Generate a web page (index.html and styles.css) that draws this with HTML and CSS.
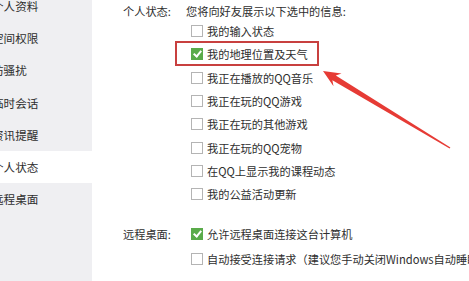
FILE: index.html
```html
<!DOCTYPE html>
<html lang="zh-CN">
<head>
<meta charset="utf-8">
<link rel="stylesheet" href="styles.css">
</head>
<body>
<div class="page">
  <nav class="sidebar">
    <div class="nav-item">个人资料</div>
    <div class="nav-item">空间权限</div>
    <div class="nav-item">防骚扰</div>
    <div class="nav-item">临时会话</div>
    <div class="nav-item">资讯提醒</div>
    <div class="nav-item active">个人状态</div>
    <div class="nav-item">远程桌面</div>
  </nav>
  <main class="main">
    <section class="section status">
      <div class="label">个人状态:</div>
      <div class="content">
        <div class="intro">您将向好友展示以下选中的信息:</div>
        <div class="options">
          <div class="option"><span class="box"></span>我的输入状态</div>
          <div class="option"><span class="box checked"></span>我的地理位置及天气</div>
          <div class="option"><span class="box"></span>我正在播放的QQ音乐</div>
          <div class="option"><span class="box"></span>我正在玩的QQ游戏</div>
          <div class="option"><span class="box"></span>我正在玩的其他游戏</div>
          <div class="option"><span class="box"></span>我正在玩的QQ宠物</div>
          <div class="option"><span class="box"></span>在QQ上显示我的课程动态</div>
          <div class="option"><span class="box"></span>我的公益活动更新</div>
        </div>
      </div>
    </section>
    <section class="section remote">
      <div class="label">远程桌面:</div>
      <div class="content">
        <div class="options">
          <div class="option"><span class="box checked"></span>允许远程桌面连接这台计算机</div>
          <div class="option"><span class="box"></span>自动接受连接请求（建议您手动关闭Windows自动睡眠和</div>
        </div>
      </div>
    </section>
  </main>
  <div class="highlight"></div>
  <svg class="arrow" width="469" height="281" viewBox="0 0 469 281">
    <polygon points="323,71 341.5,73.5 335.8,75.6 450.4,147.6 449.6,148.4 332.4,80.2 333.5,86.2" fill="#e63b35"/>
  </svg>
</div>
</body>
</html>
```
FILE: styles.css
```css
html, body {
  margin: 0;
  padding: 0;
  background: #ffffff;
}
.page {
  position: relative;
  width: 469px;
  height: 281px;
  overflow: hidden;
  display: flex;
  font-family: "Noto Sans CJK SC", "Microsoft YaHei", sans-serif;
  font-size: 11.2px;
  color: #2e2e2e;
}
.sidebar {
  width: 92px;
  flex: none;
  background: #efeff2;
  padding-top: 0;
  margin-top: -10px;
  height: 300px;
}
.nav-item {
  height: 32.2px;
  line-height: 32.2px;
  text-indent: -8px;
  white-space: nowrap;
  font-size: 11.6px;
}
.nav-item.active {
  background: #ffffff;
}
.main {
  flex: 1;
  padding-left: 31px;
  display: flex;
  flex-direction: column;
}
.section {
  display: grid;
  grid-template-columns: 63px 1fr;
}
.label {
  line-height: 22px;
  white-space: nowrap;
}
.intro {
  line-height: 22px;
  white-space: nowrap;
}
.options {
  display: flex;
  flex-direction: column;
  padding-left: 5px;
}
.status .options {
  margin-top: -2.6px;
}
.option {
  height: 23.3px;
  display: flex;
  align-items: center;
  gap: 4px;
  white-space: nowrap;
}
.remote {
  margin-top: 16px;
}
.remote .label {
  line-height: 25px;
}
.remote .option {
  height: 25px;
}
.box {
  width: 10px;
  height: 10px;
  border: 1px solid #b4b4b4;
  background: #fff;
  flex: none;
  position: relative;
}
.box.checked {
  background: #5aab4a;
  border-color: #5aab4a;
}
.box.checked::after {
  content: "";
  position: absolute;
  left: 3px;
  top: 0px;
  width: 3px;
  height: 6px;
  border: solid #fff;
  border-width: 0 2px 2px 0;
  transform: rotate(40deg);
}
.highlight {
  position: absolute;
  left: 175px;
  top: 41px;
  width: 140px;
  height: 21px;
  border: 2px solid #c8403f;
}
.arrow {
  position: absolute;
  left: 0;
  top: 0;
}
```
